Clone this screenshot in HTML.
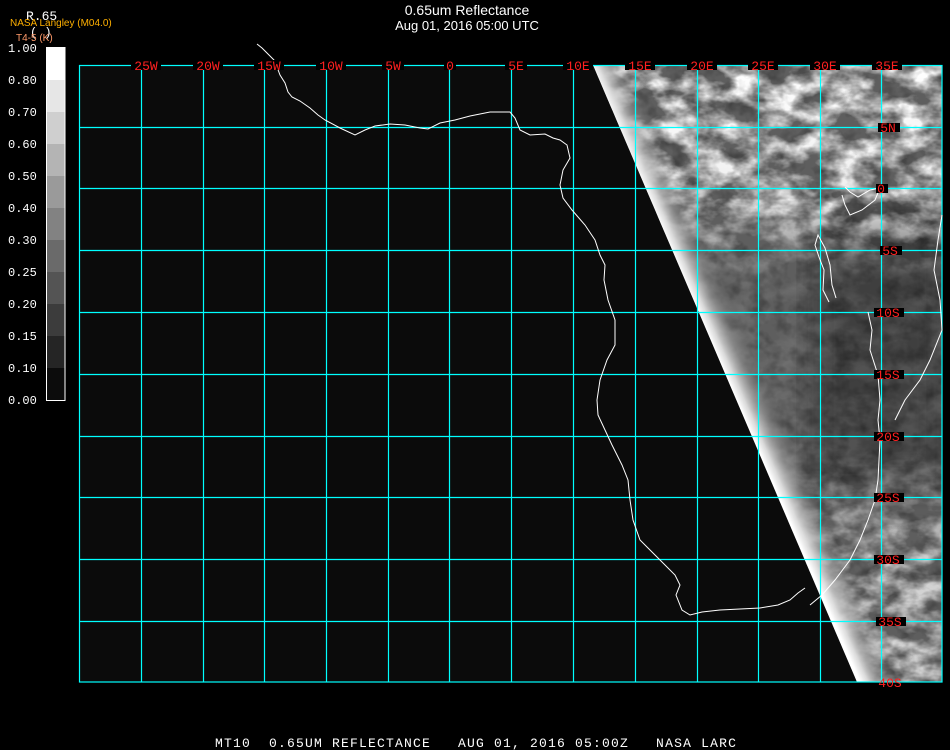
<!DOCTYPE html>
<html><head><meta charset="utf-8"><style>
html,body{margin:0;padding:0;background:#000;width:950px;height:750px;overflow:hidden}
svg{display:block}
</style></head><body>
<svg width="950" height="750" xmlns="http://www.w3.org/2000/svg" font-family="Liberation Sans, sans-serif">
<defs>
<clipPath id="sat"><polygon points="593,65 942,65 942,682 857,682"/></clipPath>
<filter id="cl" x="0" y="0" width="100%" height="100%">
<feTurbulence type="fractalNoise" baseFrequency="0.03 0.05" numOctaves="4" seed="7"/>
<feColorMatrix type="matrix" values="0 0 0 0 1  0 0 0 0 1  0 0 0 0 1  2.8 0 0 0 -1.0"/>
</filter>
<filter id="dk" x="0" y="0" width="100%" height="100%">
<feTurbulence type="fractalNoise" baseFrequency="0.06" numOctaves="3" seed="3"/>
<feColorMatrix type="matrix" values="0 0 0 0 0  0 0 0 0 0  0 0 0 0 0  0 2.5 0 0 -1.1"/>
</filter>
<filter id="bl"><feGaussianBlur stdDeviation="15"/></filter>
<linearGradient id="mg" x1="0" y1="65" x2="0" y2="682" gradientUnits="userSpaceOnUse">
<stop offset="0" stop-color="#fff" stop-opacity="1"/>
<stop offset="0.22" stop-color="#fff" stop-opacity="0.9"/>
<stop offset="0.34" stop-color="#fff" stop-opacity="0.1"/>
<stop offset="0.62" stop-color="#fff" stop-opacity="0.1"/>
<stop offset="0.8" stop-color="#fff" stop-opacity="0.7"/>
<stop offset="1" stop-color="#fff" stop-opacity="0.8"/>
</linearGradient>
<mask id="cm"><rect x="590" y="65" width="360" height="620" fill="url(#mg)"/></mask>
<linearGradient id="limb" x1="725" y1="373" x2="757" y2="359" gradientUnits="userSpaceOnUse">
<stop offset="0" stop-color="#fff" stop-opacity="1"/>
<stop offset="0.2" stop-color="#e0e0e0" stop-opacity="0.95"/>
<stop offset="0.55" stop-color="#a0a0a0" stop-opacity="0.6"/>
<stop offset="1" stop-color="#777" stop-opacity="0"/>
</linearGradient>
</defs>
<rect x="79" y="65" width="863" height="617" fill="#0b0b0b"/>
<g clip-path="url(#sat)">
<rect x="590" y="65" width="360" height="620" fill="#5e5e5e"/>
<rect x="810" y="210" width="140" height="280" fill="#383838" opacity="0.8" filter="url(#bl)"/>
<g mask="url(#cm)"><rect x="590" y="65" width="360" height="620" filter="url(#cl)"/></g>
<rect x="590" y="65" width="360" height="620" filter="url(#dk)" opacity="0.3"/>
<rect x="590" y="65" width="360" height="620" fill="url(#limb)"/>
</g>
<g stroke="#00ffff" stroke-width="1.2" fill="none">
<rect x="79.5" y="65.5" width="862.5" height="616.5"/>
<path d="M141.5 65V682M203.5 65V682M264.5 65V682M326.5 65V682M388.5 65V682M449.5 65V682M511.5 65V682M573.5 65V682M635.5 65V682M697.5 65V682M758.5 65V682M820.5 65V682M881.5 65V682"/>
<path d="M79 127.5H942M79 188.5H942M79 250.5H942M79 312.5H942M79 374.5H942M79 436.5H942M79 497.5H942M79 559.5H942M79 621.5H942"/>
</g>
<polyline fill="none" stroke="#fff" stroke-width="1" points="257,44 262,48 266,52 274,60 277,67 280,75 285,83 288,92 292,97 300,101 310,108 318,115 325,120 340,128 355,135 365,130 375,126 390,124 405,125 420,128 428,129 440,123 455,120 470,116 490,112 510,112 515,118 520,130 530,135 545,134 553,138 560,140 567,145 570,158 563,170 560,185 563,198 572,210 585,225 595,240 600,255 605,265 604,280 608,300 615,320 615,345 607,360 600,380 597,400 598,415 605,430 612,445 622,465 628,480 630,500 633,520 640,540 650,550 660,560 675,575 680,585 676,595 682,610 690,615 702,612 720,610 740,609 760,608 778,605 790,600 798,593 805,588"/>
<polyline fill="none" stroke="#fff" stroke-width="1" points="829,302 823,290 824,270 819,257 815,245 818,235 825,248 830,265 832,285 836,298"/>
<polyline fill="none" stroke="#fff" stroke-width="1" points="845,187 850,192 858,197 870,190 880,188 875,200 862,210 850,215 845,205 842,195"/>
<polyline fill="none" stroke="#fff" stroke-width="1" points="868,312 872,330 870,350 878,375 880,400 878,420 880,440 878,480 875,500 868,520 860,540 850,560 835,580 822,595 810,605"/>
<polyline fill="none" stroke="#fff" stroke-width="1" points="942,215 938,240 934,270 940,300 942,330 930,360 920,380 905,400 895,420"/>
<g font-family="Liberation Mono, monospace" font-size="13" fill="#ff2020" text-anchor="middle">
<g fill="#000"><rect x="131" y="60" width="30" height="10"/><rect x="193" y="60" width="30" height="10"/><rect x="254" y="60" width="30" height="10"/><rect x="316" y="60" width="30" height="10"/><rect x="382" y="60" width="22" height="10"/><rect x="444" y="60" width="12" height="10"/><rect x="505" y="60" width="22" height="10"/><rect x="563" y="60" width="30" height="10"/><rect x="625" y="60" width="30" height="10"/><rect x="687" y="60" width="30" height="10"/><rect x="748" y="60" width="30" height="10"/><rect x="810" y="60" width="30" height="10"/><rect x="872" y="60" width="30" height="10"/>
<rect x="878" y="123" width="22" height="9"/><rect x="876" y="184" width="12" height="9"/><rect x="880" y="246" width="22" height="9"/><rect x="874" y="308" width="30" height="9"/><rect x="874" y="370" width="30" height="9"/><rect x="874" y="432" width="30" height="9"/><rect x="874" y="493" width="30" height="9"/><rect x="874" y="555" width="30" height="9"/><rect x="876" y="617" width="30" height="9"/></g>
<text x="146" y="70">25W</text><text x="208" y="70">20W</text><text x="269" y="70">15W</text><text x="331" y="70">10W</text><text x="393" y="70">5W</text><text x="450" y="70">0</text><text x="516" y="70">5E</text><text x="578" y="70">10E</text><text x="640" y="70">15E</text><text x="702" y="70">20E</text><text x="763" y="70">25E</text><text x="825" y="70">30E</text><text x="887" y="70">35E</text>
<text x="888" y="132">5N</text><text x="881" y="193">0</text><text x="890" y="255">5S</text><text x="888" y="317">10S</text><text x="888" y="379">15S</text><text x="888" y="441">20S</text><text x="888" y="502">25S</text><text x="888" y="564">30S</text><text x="890" y="626">35S</text><text x="890" y="687">40S</text>
</g>
<g>
<rect x="46" y="47" width="19" height="33" fill="#ffffff"/>
<rect x="46" y="80" width="19" height="32" fill="#e6e6e6"/>
<rect x="46" y="112" width="19" height="32" fill="#cfcfcf"/>
<rect x="46" y="144" width="19" height="32" fill="#b4b4b4"/>
<rect x="46" y="176" width="19" height="32" fill="#9a9a9a"/>
<rect x="46" y="208" width="19" height="32" fill="#828282"/>
<rect x="46" y="240" width="19" height="32" fill="#6a6a6a"/>
<rect x="46" y="272" width="19" height="32" fill="#545454"/>
<rect x="46" y="304" width="19" height="32" fill="#3c3c3c"/>
<rect x="46" y="336" width="19" height="32" fill="#252525"/>
<rect x="46" y="368" width="19" height="32" fill="#0c0c0c"/>
<rect x="46.5" y="47.5" width="18.5" height="353" fill="none" stroke="#fff" stroke-width="1"/>
</g>
<g font-family="Liberation Mono, monospace" font-size="12" fill="#fff">
<text x="8" y="52">1.00</text><text x="8" y="84">0.80</text><text x="8" y="116">0.70</text><text x="8" y="148">0.60</text><text x="8" y="180">0.50</text><text x="8" y="212">0.40</text><text x="8" y="244">0.30</text><text x="8" y="276">0.25</text><text x="8" y="308">0.20</text><text x="8" y="340">0.15</text><text x="8" y="372">0.10</text><text x="8" y="404">0.00</text>
<text x="26" y="20" font-size="13">R.65</text>
<text x="30" y="36" font-size="12">(  )</text>
</g>
<text x="10" y="26" font-size="10" fill="#ffb000">NASA Langley (M04.0)</text>
<text x="16" y="41" font-size="10" fill="#ff9a6a">T4-5 (K)</text>
<text x="467" y="15" font-size="14" fill="#fff" text-anchor="middle">0.65um Reflectance</text>
<text x="467" y="30" font-size="13" fill="#fff" text-anchor="middle">Aug 01, 2016 05:00 UTC</text>
<text x="215" y="747" font-family="Liberation Mono, monospace" font-size="13" letter-spacing="1.2" fill="#fff" xml:space="preserve">MT10  0.65UM REFLECTANCE   AUG 01, 2016 05:00Z   NASA LARC</text>
</svg>
</body></html>
